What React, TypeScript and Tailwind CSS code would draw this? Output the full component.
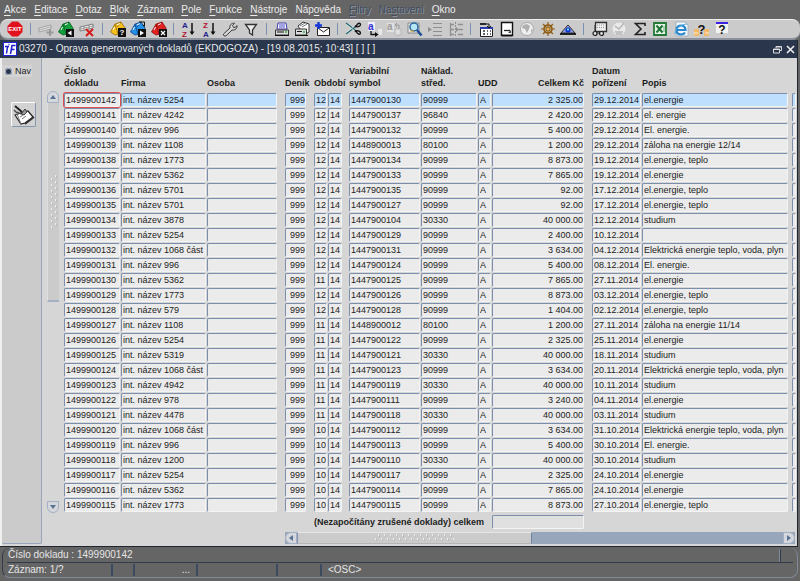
import type { ReactNode } from "react";

type Row = [string, string, string, string, string, string, string, string, string];

// doklad, firma, měsíc, rok, variabilní symbol, středisko, celkem, datum, popis
const ROWS: Row[] = [
  ["1499900142", "int. název 5254", "12", "14", "1447900130", "90999", "2 325.00", "29.12.2014", "el.energie"],
  ["1499900141", "int. název 4242", "12", "14", "1447900137", "96840", "2 420.00", "29.12.2014", "el. energie"],
  ["1499900140", "int. název 996", "12", "14", "1447900132", "90999", "5 400.00", "29.12.2014", "El. energie."],
  ["1499900139", "int. název 1108", "12", "14", "1448900013", "80100", "1 200.00", "29.12.2014", "záloha na energie 12/14"],
  ["1499900138", "int. název 1773", "12", "14", "1447900134", "90999", "8 873.00", "19.12.2014", "el.energie, teplo"],
  ["1499900137", "int. název 5362", "12", "14", "1447900133", "90999", "7 865.00", "19.12.2014", "el.energie"],
  ["1499900136", "int. název 5701", "12", "14", "1447900135", "90999", "92.00", "17.12.2014", "el.energie, teplo"],
  ["1499900135", "int. název 5701", "12", "14", "1447900127", "90999", "92.00", "17.12.2014", "el.energie, teplo"],
  ["1499900134", "int. název 3878", "12", "14", "1447900104", "30330", "40 000.00", "12.12.2014", "studium"],
  ["1499900133", "int. název 5254", "12", "14", "1447900129", "90999", "2 400.00", "10.12.2014", ""],
  ["1499900132", "int. název 1068 část 7", "12", "14", "1447900131", "90999", "3 634.00", "04.12.2014", "Elektrická energie teplo, voda, plyn"],
  ["1499900131", "int. název 996", "12", "14", "1447900124", "90999", "5 400.00", "08.12.2014", "El. energie."],
  ["1499900130", "int. název 5362", "11", "14", "1447900125", "90999", "7 865.00", "27.11.2014", "el.energie"],
  ["1499900129", "int. název 1773", "12", "14", "1447900126", "90999", "8 873.00", "03.12.2014", "el.energie, teplo"],
  ["1499900128", "int. název 579", "12", "14", "1447900128", "90999", "1 404.00", "02.12.2014", "el.energie, teplo"],
  ["1499900127", "int. název 1108", "11", "14", "1448900012", "80100", "1 200.00", "27.11.2014", "záloha na energie 11/14"],
  ["1499900126", "int. název 5254", "11", "14", "1447900122", "90999", "2 325.00", "25.11.2014", "el.energie"],
  ["1499900125", "int. název 5319", "11", "14", "1447900121", "30330", "40 000.00", "18.11.2014", "studium"],
  ["1499900124", "int. název 1068 část 7", "11", "14", "1447900123", "90999", "3 634.00", "20.11.2014", "Elektrická energie teplo, voda, plyn"],
  ["1499900123", "int. název 4942", "11", "14", "1447900119", "30330", "40 000.00", "10.11.2014", "studium"],
  ["1499900122", "int. název 978", "11", "14", "1447900111", "90999", "3 240.00", "04.11.2014", "el.energie"],
  ["1499900121", "int. název 4478", "11", "14", "1447900118", "30330", "40 000.00", "03.11.2014", "studium"],
  ["1499900120", "int. název 1068 část 7", "10", "14", "1447900112", "90999", "3 634.00", "31.10.2014", "Elektrická energie teplo, voda, plyn"],
  ["1499900119", "int. název 996", "10", "14", "1447900113", "90999", "5 400.00", "30.10.2014", "El. energie."],
  ["1499900118", "int. název 1200", "10", "14", "1447900110", "30330", "40 000.00", "30.10.2014", "studium"],
  ["1499900117", "int. název 5254", "10", "14", "1447900117", "90999", "2 325.00", "24.10.2014", "el.energie"],
  ["1499900116", "int. název 5362", "10", "14", "1447900114", "90999", "7 865.00", "24.10.2014", "el.energie"],
  ["1499900115", "int. název 1773", "10", "14", "1447900115", "90999", "8 873.00", "27.10.2014", "el.energie, teplo"],
];

// text before the access key, the access key, text after it
const MENU: { parts: [string, string, string]; disabled?: boolean }[] = [
  { parts: ["", "A", "kce"] },
  { parts: ["", "E", "ditace"] },
  { parts: ["", "D", "otaz"] },
  { parts: ["", "B", "lok"] },
  { parts: ["", "Z", "áznam"] },
  { parts: ["", "P", "ole"] },
  { parts: ["", "F", "unkce"] },
  { parts: ["", "N", "ástroje"] },
  { parts: ["Náp", "o", "věda"] },
  { parts: ["", "F", "iltry"], disabled: true },
  { parts: ["Na", "s", "tavení"], disabled: true },
  { parts: ["", "O", "kno"] },
];

function House({ color, shade }: { color: string; shade: string }) {
  return (
    <>
      <path d="M.5 11 5 3l6-2 4 6-1 5-9 2z" fill={color} stroke={shade} strokeWidth=".8" />
      <path d="M5 3l3 10M11 1 7 6" stroke={shade} strokeWidth=".8" fill="none" />
      <path d="M7 4l3-1.500M3 9l1.500-3" stroke="#fff" strokeWidth="1" />
    </>
  );
}

function LetterSort({ top, bottom }: { top: string; bottom: string }) {
  return (
    <>
      <text x="1" y="6.500" fontSize="8" fontWeight="bold" fill={top === "A" ? "#24248c" : "#b01030"}>{top}</text>
      <text x="1" y="15.800" fontSize="8" fontWeight="bold" fill={bottom === "A" ? "#24248c" : "#b01030"}>{bottom}</text>
      <path d="M11 2v11" stroke="#111" strokeWidth="1.500" />
      <path d="M8.500 10.500h5L11 14z" fill="#111" />
    </>
  );
}

function Printer() {
  return (
    <>
      <path d="M4 2h8l1 6H3z" fill="#fff" stroke="#3b3ba8" />
      <path d="M5 4h6M5 6h6" stroke="#4848c8" />
      <path d="M1.500 9h13v5h-13z" fill="#ddd" stroke="#333" />
      <path d="M1 14.500h14M3 11h7" stroke="#111" />
      <path d="M11 11h2" stroke="#2fae3f" strokeWidth="1.500" />
    </>
  );
}

const TOOLS: { name: string; art: ReactNode }[][] = [
  [
    {
      name: "Konec",
      art: (
        <>
          <path d="M5 .5h6L15.500 5v6L11 15.500H5L.5 11V5z" fill="#e0101c" />
          <text x="8" y="10" fontSize="6" fontWeight="bold" textAnchor="middle" fill="#fff">EXIT</text>
        </>
      ),
    },
  ],
  [
    {
      name: "Nový záznam",
      art: (
        <>
          <path d="M1 7 13 4v4L1 11z" fill="#e4e4e4" stroke="#a2a2a2" />
          <path d="M1 9l12-3" stroke="#a8a8a8" />
          <path d="M12 8v7M8.500 11.500h7" stroke="#989898" strokeWidth="2" />
        </>
      ),
    },
    {
      name: "Uložit",
      art: (
        <>
          <House color="#12a03c" shade="#075c20" />
          <path d="M8 8h8v8H8z" fill="#111" />
          <path d="M9.500 12l4-2.500v5z" fill="#fff" />
        </>
      ),
    },
    {
      name: "Smazat záznam",
      art: (
        <>
          <path d="M1 6 14 3v4L1 10z" fill="#f0f0f0" stroke="#666" strokeWidth=".8" />
          <path d="M1 8l13-3M5 5v4M10 4v4" stroke="#888" strokeWidth=".8" />
          <path d="M7 8l7 7M14 8l-7 7" stroke="#d81c1c" strokeWidth="2" />
        </>
      ),
    },
  ],
  [
    {
      name: "Zadat dotaz",
      art: (
        <>
          <House color="#f6bf1e" shade="#96690a" />
          <path d="M8 7h8v9H8z" fill="#111" />
          <text x="12" y="14" fontSize="8" fontWeight="bold" textAnchor="middle" fill="#fff">?</text>
        </>
      ),
    },
    {
      name: "Provést dotaz",
      art: (
        <>
          <House color="#2490e8" shade="#0c3f86" />
          <path d="M8 8h8v8H8z" fill="#111" />
          <path d="M10 9.500 14 12l-4 2.500z" fill="#fff" />
          <path d="M9 1h5.500v4M12.500 3.500l2 2" fill="none" stroke="#111" />
        </>
      ),
    },
    {
      name: "Zrušit dotaz",
      art: (
        <>
          <House color="#e32222" shade="#8c0c0c" />
          <path d="M8 8h8v8H8z" fill="#111" />
          <path d="M10 10l4 4M14 10l-4 4" stroke="#fff" strokeWidth="1.200" />
        </>
      ),
    },
  ],
  [
    { name: "Řadit vzestupně", art: <LetterSort top="A" bottom="Z" /> },
    { name: "Řadit sestupně", art: <LetterSort top="Z" bottom="A" /> },
    {
      name: "Nástroje",
      art: (
        <path
          d="M1.500 13 8 7C7.500 4 9.500 2 12.500 2.200L10.500 4.500l1 2 2.200-.2L15 4.500c.5 3-2 5-5 4.500L4 14.800c-1.500.8-3.200-.5-2.500-1.800z"
          fill="#d8d8d8"
          stroke="#3a3a3a"
        />
      ),
    },
    { name: "Filtr", art: <path d="M2.500 3.500h11L9.500 9v5l-3-2V9z" fill="#eee" stroke="#333" strokeWidth="1.300" /> },
  ],
  [
    { name: "Tisk", art: <Printer /> },
    {
      name: "Tisk sestavy",
      art: (
        <>
          <path d="M4 5l5-4 6 2v8l-5 3z" fill="#fff" stroke="#333" />
          <path d="M6 5l5-3M8 6l5-3" stroke="#777" />
          <path d="M1.500 8h11v6h-11z" fill="#ddd" stroke="#333" />
          <path d="M3 10.500h5M1 14.500h13" stroke="#111" />
          <path d="M9 11h2" stroke="#2fae3f" strokeWidth="1.500" />
        </>
      ),
    },
    {
      name: "Odeslat",
      art: (
        <>
          <path d="M3.500 6.500h12v8h-12z" fill="#fff" stroke="#222" />
          <path d="M4 7l5.500 4L15 7" fill="none" stroke="#222" />
          <path d="M4.500 1v7M1 4.500h7" stroke="#1838d8" strokeWidth="2.400" />
        </>
      ),
    },
  ],
  [
    {
      name: "Vyjmout",
      art: (
        <>
          <path d="M1 2l9 7M1 13l9-7" stroke="#2a6f78" strokeWidth="1.500" />
          <path d="M1 3.500l8 6M1 11.500l8-6" stroke="#e6f2f2" strokeWidth=".6" />
          <path d="M10 9.500l2 1.500M10 6l2-1.500" stroke="#111" strokeWidth="2" />
          <path d="M11 10c2-1 4.500.5 4.500 2s-2.500 2.500-4.500-2zM11 5.500c2 1 4.500-.5 4.500-2s-2.500-2.500-4.500 2z" fill="none" stroke="#111" strokeWidth="1.300" />
        </>
      ),
    },
    {
      name: "Kopírovat",
      art: (
        <>
          <path d="M2 1h7v9H2z" fill="#eef" />
          <text x="2" y="8.500" fontSize="10" fontWeight="bold" fill="#3434d0">a</text>
          <path d="M5 10v3.500h5" fill="none" stroke="#111" strokeWidth="1.300" />
          <path d="M9 11l3.500 2.500L9 16z" fill="#111" />
          <path d="M12 8h4v6h-3" fill="#e8e8e8" />
        </>
      ),
    },
    {
      name: "Vložit",
      art: (
        <>
          <path d="M1 2h7v9H1z" fill="#e2e2e2" />
          <text x="1" y="9" fontSize="10" fontWeight="bold" fill="#999">a</text>
          <path d="M9 4h4v8M11 2 9 4l2 2" fill="none" stroke="#999" />
          <path d="M9 8h6v6H9z" fill="#dedede" stroke="#aaa" strokeWidth=".6" />
        </>
      ),
    },
    {
      name: "Hledat",
      art: (
        <>
          <path d="M1 2h11v10H1z" fill="#e9e9e9" stroke="#888" />
          <circle cx="7" cy="6" r="4" fill="#b8e6f6" stroke="#27689c" strokeWidth="1.500" />
          <path d="M10 9l4.500 5.500" stroke="#1c4f94" strokeWidth="2.600" />
          <path d="M3 10h4" stroke="#d8a020" />
        </>
      ),
    },
    {
      name: "Odsadit",
      art: (
        <>
          <path d="M6 2.500h9M6 6.500h9M6 10.500h9M6 14.500h9" stroke="#8f8f8f" strokeWidth="1.200" />
          <path d="M1 6l4 2.500L1 11z" fill="#8f8f8f" />
        </>
      ),
    },
    {
      name: "Strom",
      art: (
        <>
          <path d="M2.500 2v13M2 3.500h4M2 8.500h4M2 13.500h4M10 3.500h5M11 8.500h4M10 13.500h5" stroke="#8f8f8f" strokeWidth="1.300" fill="none" />
          <path d="M7.500 1v14" stroke="#8f8f8f" strokeDasharray="2 1" />
          <path d="M8 6l3 2.500L8 11z" fill="#8f8f8f" />
        </>
      ),
    },
  ],
  [
    {
      name: "Kalendář",
      art: (
        <>
          <path d="M2 2h6v2H2z" fill="#2a2a2a" />
          <path d="M2.500 6.500h12v9h-12z" fill="#fff" stroke="#222" />
          <path d="M2 7h13" stroke="#2a3cae" strokeWidth="2" />
          <path d="M5 10h2M9 10h1M12 10h1M5 13h2M9 13h1M12 13h1" stroke="#333" strokeWidth="1.500" />
          <path d="M8 3h3v4M9 5l2 2 2-2" fill="none" stroke="#111" />
        </>
      ),
    },
    {
      name: "Dokument",
      art: (
        <>
          <path d="M2.500 1.500h11v13h-11z" fill="#fff" stroke="#111" strokeWidth="1.400" />
          <path d="M3 14.500h10" stroke="#111" strokeWidth="1.600" />
          <path d="M5 9.500h6" stroke="#222" strokeWidth="1.300" />
          <path d="M9 12h3v-3z" fill="#444" />
        </>
      ),
    },
    {
      name: "Globus",
      art: (
        <>
          <circle cx="8" cy="8" r="6.500" fill="#efefef" stroke="#aaa" />
          <path d="M4 4l4-1 3 2-1 3-2 4-2-4-3-1zM12 8l2 1-2 3z" fill="#b0b0b0" />
        </>
      ),
    },
    {
      name: "Kormidlo",
      art: (
        <>
          <circle cx="8" cy="8" r="4" fill="none" stroke="#8f5c14" strokeWidth="1.600" />
          <path d="M8 1v14M1 8h14M3 3l10 10M13 3 3 13" stroke="#8f5c14" strokeWidth="1.200" />
          <circle cx="8" cy="8" r="1.500" fill="#e6b050" />
        </>
      ),
    },
    {
      name: "Pohled",
      art: (
        <>
          <path d="M1 12 8 4l7 8z" fill="#8f9fd8" stroke="#333" />
          <circle cx="8" cy="9" r="2.600" fill="#1633d0" />
          <circle cx="8" cy="8.500" r="1" fill="#6ff" />
          <path d="M0 13h16" stroke="#111" strokeWidth="1.800" />
        </>
      ),
    },
  ],
  [
    {
      name: "Prohlížeč",
      art: (
        <>
          <path d="M4.500 1.500h11v9h-11z" fill="#eee" stroke="#333" strokeWidth="1.300" />
          <path d="M6 4h8M6 6.500h8" stroke="#999" strokeDasharray="1 1" />
          <path d="M4 4v8h6v-2" fill="none" stroke="#333" />
          <circle cx="4" cy="12.500" r="2" fill="#ddd" stroke="#222" strokeWidth="1.200" />
          <circle cx="10.500" cy="12.500" r="2" fill="#ddd" stroke="#222" strokeWidth="1.200" />
        </>
      ),
    },
    {
      name: "Potvrdit",
      art: (
        <>
          <circle cx="8" cy="8" r="6.500" fill="#e9e9e9" />
          <path d="M4 5l4 3 5-6M4 11h8M5 13h6" fill="none" stroke="#b5b5b5" strokeWidth="1.300" />
        </>
      ),
    },
    { name: "Součet", art: <path d="M13 5V2.500H3.500L9 8l-5.500 5.500H13V11" fill="none" stroke="#222" strokeWidth="1.600" /> },
    {
      name: "Excel",
      art: (
        <>
          <path d="M2 2h12v12H2z" fill="#e6f2e6" stroke="#247a38" strokeWidth="1.800" />
          <path d="M4.500 4.500l6 7M10.500 4.500l-6 7" stroke="#1c7434" strokeWidth="2" />
          <path d="M12 5v6" stroke="#6cae7a" />
        </>
      ),
    },
    {
      name: "Internet",
      art: (
        <>
          <path d="M3 1h9l3 3v11H3z" fill="#f4f8fc" stroke="#9ab" strokeWidth=".8" />
          <path d="M3.500 9h9c0-6-9-6-9 0s7 5 8.500 2.500" fill="none" stroke="#2788cc" strokeWidth="2.200" />
          <path d="M2 13C1 9 8 3 14 3" fill="none" stroke="#58a8de" />
        </>
      ),
    },
    {
      name: "Nápověda k poli",
      art: (
        <>
          <path d="M1 8h5v7H1zM11 8h5v7h-5z" fill="#f3ba6c" />
          <path d="M1 12h4M12 12h4" stroke="#fff0d0" />
          <text x="8.500" y="12.500" fontSize="13" fontWeight="bold" textAnchor="middle" fill="#111">?</text>
        </>
      ),
    },
    {
      name: "Nápověda",
      art: (
        <>
          <path d="M2 2h12v10H2z" fill="#f2f2f2" />
          <path d="M2 2h12" stroke="#3a22e0" strokeWidth="2" />
          <text x="8" y="13" fontSize="12" fontWeight="bold" textAnchor="middle" fill="#111">?</text>
        </>
      ),
    },
  ],
];

const field =
  "block h-[14px] w-full min-w-0 rounded-xs border border-t-[#7b8eab] border-l-[#7b8eab] border-r-[#f4f4f4] border-b-[#f4f4f4] pl-px text-[9px] leading-[12px] text-[#222] outline-none";

function Cell({
  label,
  value = "",
  selected,
  focused,
  gap = "pr-px",
  right,
}: {
  label: string;
  value?: string;
  selected: boolean;
  focused?: boolean;
  gap?: string;
  right?: boolean;
}) {
  return (
    <td className={`p-0 align-top ${gap}`}>
      <input
        aria-label={label}
        defaultValue={value}
        className={`${field} ${right ? "text-right" : ""} ${
          focused ? "relative bg-[#ececec] ring-1 ring-[#e05050]" : selected ? "bg-[#bfdfff]" : "bg-[#ebebeb]"
        }`}
      />
    </td>
  );
}

const arrowButton = "flex shrink-0 items-center justify-center border border-[#a3afc2] bg-[#d4d7dc]";

function Arrow({ d }: { d: string }) {
  return (
    <svg viewBox="0 0 8 8" className="size-2" aria-hidden="true">
      <path d={d} fill="#5a7196" />
    </svg>
  );
}

function Grip({ vertical }: { vertical?: boolean }) {
  return (
    <svg className={vertical ? "h-[53px] w-2" : "h-2 w-20"} aria-hidden="true">
      <defs>
        <pattern id={vertical ? "gripV" : "gripH"} width={vertical ? 8 : 6} height={vertical ? 6 : 8} patternUnits="userSpaceOnUse">
          <path d={vertical ? "M1 4h1M5 1h1" : "M1 5h1M4 1h1"} stroke="#fafafa" strokeWidth="1.500" />
          <path d={vertical ? "M2 5h1M6 2h1" : "M2 6h1M5 2h1"} stroke="#aaa" />
        </pattern>
      </defs>
      <rect width="100%" height="100%" fill={vertical ? "url(#gripV)" : "url(#gripH)"} />
    </svg>
  );
}

const head = "p-0 pb-1 text-left align-bottom whitespace-nowrap";

export default function App() {
  return (
    <div className="flex min-h-screen flex-col overflow-hidden bg-[#656565] font-['Liberation_Sans',Arial,sans-serif] text-[9px] text-[#222]">
      <nav className="flex h-[19px] items-center gap-2 px-1 pt-px text-[10px] leading-[14px] text-[#ececec]">
        {MENU.map(({ parts: [before, key, after], disabled }) => (
          <button
            key={before + key + after}
            disabled={disabled}
            className={disabled ? "text-[#414c5e] [text-shadow:1px_1px_0_#8b93a0]" : ""}
          >
            {before}
            <span className="underline underline-offset-2">{key}</span>
            {after}
          </button>
        ))}
      </nav>

      <div className="h-[21px] rounded-l-lg rounded-r-lg border-t border-b-2 border-t-[#eee] border-b-[#8b929c] bg-[#cbcbcb]">
        <div className="flex h-full max-w-[730px] items-center justify-between pl-[7px]">
          {TOOLS.map((group, g) => [
            g > 0 && (
              <span key={`s${g}`} className="flex w-1.5 justify-center">
                <i className="h-3 w-px bg-[#7c90b4]" />
              </span>
            ),
            ...group.map((tool) => (
              <button key={tool.name} aria-label={tool.name}>
                <svg viewBox="0 0 16 16" className="block size-4 overflow-visible" aria-hidden="true">
                  {tool.art}
                </svg>
              </button>
            )),
          ])}
        </div>
      </div>

      <div className="mr-0.5 flex flex-col border-r border-b border-[#20262f] bg-[#d6d6d6]">
        <header className="flex h-[18px] items-center bg-[#29364b] pr-0.5 pl-[3px] text-[#e8e8e8]">
          <svg viewBox="0 0 14 14" className="h-3.5 w-3.5 shrink-0" aria-hidden="true">
            <rect width="14" height="14" fill="#2222d8" />
            <rect x="1" y="1" width="12" height="12" fill="#fff" />
            <path d="M2 4.500h4M4.500 5 3.500 11.500M7.500 12 9 3.500h3.500M8.500 7.500h3M5.500 2.500h1" fill="none" stroke="#1c1cd0" strokeWidth="1.500" />
          </svg>
          <h1 className="ml-0.5 flex-1 truncate text-[10px] leading-[14px]">
            03270 - Oprava generovaných dokladů (EKDOGOZA) - [19.08.2015; 10:43] [ ] [ ]
          </h1>
          <button aria-label="Obnovit" className="mr-1">
            <svg viewBox="0 0 9 9" className="block size-[9px]" fill="none" stroke="#dcdcdc" aria-hidden="true">
              <path d="M3 3V1.500h5.500v4H7M.5 4h6v4h-6zM.5 4.500h6M3 2h5.500" />
            </svg>
          </button>
          <button aria-label="Zavřít">
            <svg viewBox="0 0 9 9" className="block size-[9px]" stroke="#f0f0f0" strokeWidth="1.600" aria-hidden="true">
              <path d="M1 1l7 7M8 1 1 8" />
            </svg>
          </button>
        </header>

        <div className="flex border-l-2 border-[#f0f0f0]">
          <aside className="mb-0.5 flex w-10 shrink-0 flex-col items-center rounded-b-xs border-r border-b border-r-[#98a6bb] border-b-[#98a6bb] bg-[#cbcbcb] pt-[7px]">
            <label className="flex h-3 items-center gap-[3px] self-start bg-[#d3d3d3] pr-px pl-[3px] leading-[12px]">
              <input
                type="radio"
                name="nav"
                defaultChecked
                className="m-0 size-[7px] appearance-none rounded-full bg-[#29364b] ring-1 ring-[#a9b5c8] ring-inset"
              />
              Nav
            </label>
            <button
              aria-label="Upravit"
              className="mt-[25px] ml-1 flex size-[25px] items-center justify-center rounded-xs border border-t-white border-r-[#8495ae] border-b-[#8495ae] border-l-white bg-[#d2d2d2]"
            >
              <svg viewBox="0 0 22 22" className="size-[22px]" aria-hidden="true">
                <path d="M2 11l6 9 4-1 8-6-5-6-4 1z" fill="#fff" stroke="#222" strokeWidth="1.200" />
                <path d="M8 20 4 10M7 13l3-2M9 15l4-3" stroke="#777" fill="none" />
                <path d="M2 2l7 6" stroke="#222" strokeWidth="2" />
                <path d="M8 10 12 5l2 3-3 3z" fill="#999" stroke="#222" strokeWidth=".8" />
                <path d="M1 6l3 3M4 8l4 2" stroke="#444" strokeWidth="1.300" />
                <path d="M12 20l9-7" stroke="#333" strokeWidth="1.600" />
              </svg>
            </button>
          </aside>

          <main className="flex min-w-0 flex-1 pb-0.5 pl-[5px]">
            <div className="mt-[33px] mb-[31px] flex w-3 shrink-0 flex-col">
              <button aria-label="Nahoru" className={`${arrowButton} h-3 rounded-t-md`}>
                <Arrow d="M1 6 4 2l3 4z" />
              </button>
              <div className="flex h-[199px] items-center justify-center border-b-2 border-l border-b-[#a3afc2] border-l-[#dedede] bg-[#cbcbcb]">
                <Grip vertical />
              </div>
              <div className="flex-1" />
              <button aria-label="Dolů" className={`${arrowButton} h-3 rounded-b-md`}>
                <Arrow d="M1 2h6L4 6z" />
              </button>
            </div>

            <div className="ml-[5px] min-w-0 flex-1">
              <table className="w-full table-fixed border-collapse">
                <colgroup>
                  <col className="w-[57px]" />
                  <col className="w-[86px]" />
                  <col className="w-[78px]" />
                  <col className="w-[29px]" />
                  <col className="w-[14px]" />
                  <col className="w-[21px]" />
                  <col className="w-[72px]" />
                  <col className="w-[57px]" />
                  <col className="w-[14px]" />
                  <col className="w-[100px]" />
                  <col className="w-[50px]" />
                  <col />
                  <col className="w-[5px]" />
                </colgroup>
                <thead className="text-[9px] leading-[12px] text-[#1c1c1c]">
                  <tr className="h-[35px]">
                    <th className={head}>Číslo<br />dokladu</th>
                    <th className={head}>Firma</th>
                    <th className={head}>Osoba</th>
                    <th className={head}>Deník</th>
                    <th colSpan={2} className={head}>Období</th>
                    <th className={head}>Variabilní<br />symbol</th>
                    <th className={head}>Náklad.<br />střed.</th>
                    <th className={head}>UDD</th>
                    <th className="p-0 pr-2 pb-1 text-right align-bottom">Celkem Kč</th>
                    <th className={head}>Datum<br />pořízení</th>
                    <th className={head}>Popis</th>
                    <th className={head} />
                  </tr>
                </thead>
                <tbody>
                  {ROWS.map(([doc, firma, month, year, vs, center, total, date, note], i) => {
                    const selected = i === 0;
                    return (
                      <tr key={doc} className="h-[15px]">
                        <Cell label="Číslo dokladu" value={doc} selected={selected} focused={selected} />
                        <Cell label="Firma" value={firma} selected={selected} />
                        <Cell label="Osoba" selected={selected} gap="pr-2" />
                        <Cell label="Deník" value="999" selected={selected} gap="pr-2" right />
                        <Cell label="Období měsíc" value={month} selected={selected} />
                        <Cell label="Období rok" value={year} selected={selected} gap="pr-[7px]" />
                        <Cell label="Variabilní symbol" value={vs} selected={selected} />
                        <Cell label="Nákladové středisko" value={center} selected={selected} />
                        <Cell label="UDD" value="A" selected={selected} />
                        <Cell label="Celkem Kč" value={total} selected={selected} gap="pr-2" right />
                        <Cell label="Datum pořízení" value={date} selected={selected} />
                        <Cell label="Popis" value={note} selected={selected} gap="pr-1" />
                        <Cell label="Další údaj" selected={selected} />
                      </tr>
                    );
                  })}
                </tbody>
                <tfoot>
                  <tr className="h-[19px]">
                    <td colSpan={9} className="p-0 pr-2 text-right font-bold">
                      <label htmlFor="total">(Nezapočítány zrušené doklady) celkem</label>
                    </td>
                    <td className="p-0 pt-0.5 pr-2 align-top">
                      <input id="total" readOnly className={`${field} bg-[#e0e0e0]`} />
                    </td>
                    <td colSpan={3} />
                  </tr>
                </tfoot>
              </table>

              <div className="mr-0.5 ml-[221px] flex h-3 bg-[#98a6bb]">
                <button aria-label="Vlevo" className={`${arrowButton} w-3 rounded-l-md`}>
                  <Arrow d="M6 1v6L2 4z" />
                </button>
                <div className="flex w-[46%] items-center justify-center border border-t-[#e6e6e6] border-r-[#6d81a0] border-b-[#b5b5b5] border-l-[#8193b0] bg-[#cbcbcb]">
                  <Grip />
                </div>
                <div className="flex-1" />
                <button aria-label="Vpravo" className={`${arrowButton} w-3 rounded-r-md`}>
                  <Arrow d="M2 1l4 3-4 3z" />
                </button>
              </div>
            </div>
          </main>
        </div>
      </div>

      <footer className="mx-0.5 mt-px rounded-lg border border-t-0 border-[#7f8998] border-l-[#323b48] text-[10px] leading-[14px] text-[#e6e6e6]">
        <div className="mx-1 flex h-[15px] items-center border-b border-[#323b48] pr-3">
          <span className="flex-1 pl-px">Číslo dokladu : 1499900142</span>
          <i className="h-[13px] w-0.5 border-l border-[#7f8998] bg-[#323b48]" />
        </div>
        <div className="mx-1 flex h-3.5 items-center">
          <span className="w-[104px] pl-px">Záznam: 1/?</span>
          <span className="h-3 w-[22px] border-l-2 border-[#3c4a60]" />
          <span className="flex h-3 w-[63px] items-center justify-end border-l-2 border-[#3c4a60] pr-1.5">...</span>
          <span className="h-3 w-20 border-l-2 border-[#3c4a60]" />
          <span className="h-3 w-11 border-l-2 border-[#3c4a60]" />
          <span className="flex h-3 items-center border-l-2 border-[#3c4a60] pl-1.5">&lt;OSC&gt;</span>
        </div>
      </footer>
    </div>
  );
}
